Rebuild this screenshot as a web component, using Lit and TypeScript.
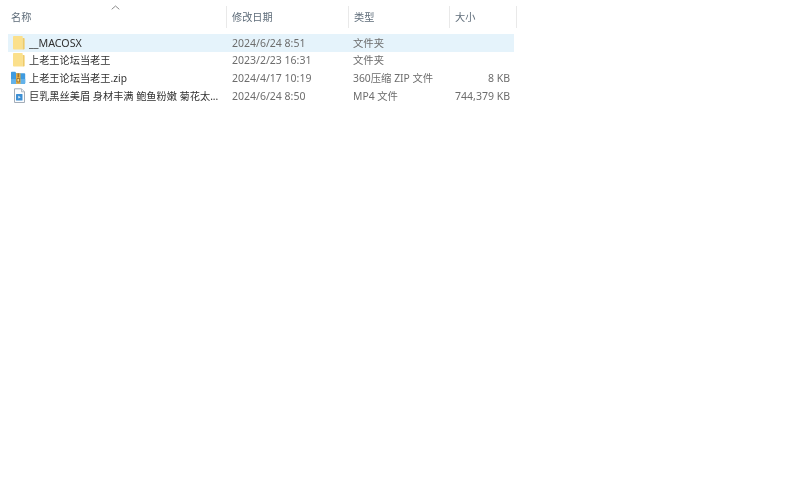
import { LitElement, html, css, svg } from "lit";
import { customElement } from "lit/decorators.js";

type Row = { icon: string; name: string; date: string; type: string; size: string; sel?: boolean };

const rows: Row[] = [
  { icon: "folder", name: "__MACOSX", date: "2024/6/24 8:51", type: "文件夹", size: "", sel: true },
  { icon: "folder", name: "上老王论坛当老王", date: "2023/2/23 16:31", type: "文件夹", size: "" },
  { icon: "zip", name: "上老王论坛当老王.zip", date: "2024/4/17 10:19", type: "360压缩 ZIP 文件", size: "8 KB" },
  { icon: "mp4", name: "巨乳黑丝美眉 身材丰满 鲍鱼粉嫩 菊花太...", date: "2024/6/24 8:50", type: "MP4 文件", size: "744,379 KB" },
];

const icons: Record<string, unknown> = {
  folder: svg`<svg class="ic" viewBox="0 0 16 16" width="16" height="16">
    <path d="M2.800 1h8c.5 0 .9.400.9 1v12.500H2.800c-.5 0-.8-.4-.8-.9V1.900c0-.5.3-.9.8-.9z" fill="#fbe08c"/>
    <path d="M11.700 3h1.100c.5 0 .8.300.8.800v9.900c0 .5-.3.800-.8.800h-1.100z" fill="#efcb68"/>
  </svg>`,
  zip: svg`<svg class="ic" viewBox="0 0 16 16" width="16" height="16">
    <path d="M0 2.500c0-.5.300-.8.800-.8h3.400l1.200 1.600h8c.5 0 .8.300.8.800v9c0 .5-.3.800-.8.800H.8c-.5 0-.8-.3-.8-.8z" fill="#3f9be0"/>
    <path d="M0 9h14.200v4.100c0 .5-.3.800-.8.800H.8c-.5 0-.8-.3-.8-.8z" fill="#62b2ea"/>
    <path d="M5 3.300h4.500v10.600H5z" fill="#e3b04a"/>
    <path d="M6.500 3.300h1.600v4H6.500z" fill="#a8752a"/>
    <path d="M6 8.500h2.600v3.400H6z" fill="#f6dc8c" stroke="#8a5a1e" stroke-width=".7"/>
  </svg>`,
  mp4: svg`<svg class="ic" viewBox="0 0 16 16" width="16" height="16">
    <path d="M3.500 .8h7l3 3v10.700h-10z" fill="#fbfcfe" stroke="#a3adb8" stroke-width="1"/>
    <path d="M10.500 .8v3h3" fill="#e6ebf1" stroke="#a3adb8" stroke-width=".8"/>
    <rect x="5" y="6" width="6.500" height="6.500" rx=".6" fill="#3c8fd4"/>
    <path d="M7.300 7.800v2.800l2.400-1.400z" fill="#e8f3fc"/>
  </svg>`,
};

@customElement("app-root")
export class AppRoot extends LitElement {
  static styles = css`
    :host {
      display: block;
      width: 800px;
      height: 486px;
      background: #fff;
      overflow: hidden;
      font-family: "Noto Sans", "Noto Sans CJK SC", sans-serif;
      font-size: 10.2px;
      color: #6d6d6d;
    }
    .list {
      width: 517px;
      padding-top: 6px;
      display: flex;
      flex-direction: column;
      filter: blur(0.3px);
    }
    .sort {
      height: 0;
      padding-left: 111px;
      color: #8b8b8b;
    }
    .sort svg {
      display: block;
      margin-top: -1px;
    }
    .head {
      display: grid;
      grid-template-columns: 227px 122px 101px 67px;
      height: 22px;
      margin-bottom: 6px;
    }
    .hc {
      display: flex;
      align-items: center;
      padding-left: 5px;
      padding-bottom: 1px;
      border-right: 1px solid #e9e9e9;
      box-sizing: border-box;
      color: #5f6d7a;
    }
    .hc:first-child {
      padding-left: 11px;
    }
    .rows {
      display: flex;
      flex-direction: column;
      margin-left: 8px;
      width: 506px;
    }
    .row {
      display: grid;
      grid-template-columns: 219px 121px 101px 61px;
      height: 17.8px;
      align-items: center;
      white-space: nowrap;
    }
    .row.sel {
      background: #e5f3fb;
      height: 18px;
    }
    .row > div {
      line-height: 16px;
      margin-top: -1px;
    }
    .name {
      display: flex;
      align-items: center;
      gap: 2px;
      color: #303030;
      padding-left: 3px;
      overflow: hidden;
    }
    .name.latin {
      font-size: 10.7px;
    }
    .ic {
      flex: none;
    }
    .date {
      padding-left: 5px;
      font-size: 10.5px;
    }
    .type {
      padding-left: 5px;
      font-size: 10.35px;
    }
    .size {
      text-align: right;
      font-size: 10.5px;
    }
  `;

  render() {
    return html`
      <div class="list">
        <div class="sort">
          <svg width="9" height="5" viewBox="0 0 9 5">
            <path d="M.7 4.300 4.500 1 8.300 4.300" fill="none" stroke="currentColor" stroke-width="1"/>
          </svg>
        </div>
        <div class="head">
          <div class="hc">名称</div>
          <div class="hc">修改日期</div>
          <div class="hc">类型</div>
          <div class="hc">大小</div>
        </div>
        <div class="rows">
          ${rows.map(
            (r) => html`
              <div class="row ${r.sel ? "sel" : ""}">
                <div class="name ${r.sel ? "latin" : ""}">${icons[r.icon]}<span>${r.name}</span></div>
                <div class="date">${r.date}</div>
                <div class="type">${r.type}</div>
                <div class="size">${r.size}</div>
              </div>
            `
          )}
        </div>
      </div>
    `;
  }
}
